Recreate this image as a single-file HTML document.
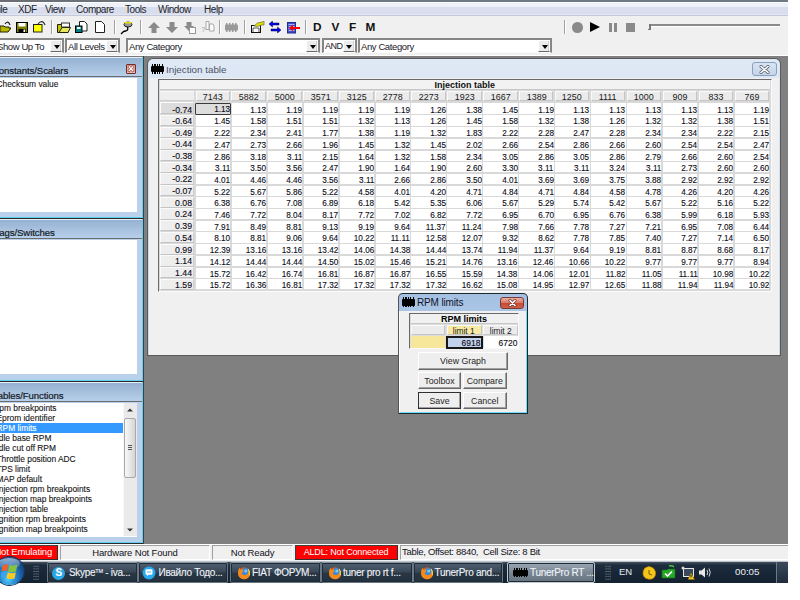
<!DOCTYPE html>
<html><head><meta charset="utf-8">
<style>
*{margin:0;padding:0;box-sizing:border-box}
html,body{width:800px;height:600px;overflow:hidden;background:#fff}
body{position:relative;font-family:"Liberation Sans",sans-serif;color:#1a1a1a}
.a{position:absolute}
.t{position:absolute;white-space:nowrap;line-height:1}
/* top */
#topstrip{left:0;top:0;width:788px;height:2px;background:linear-gradient(90deg,#6a6e74,#6c7884 30%,#6e7a86)}
#menu{left:0;top:2px;width:788px;height:14.5px;background:linear-gradient(#fff 0,#fff 1px,#eef1f8 1.5px,#eef1f8 4.5px,#d9deef 5.5px,#d9deef 12px,#e4e8f6 12.6px,#e4e8f6 13px,#c6cad8 13.5px,#c6cad8 14.5px)}
#menu .t{top:2.6px;font-size:10px;color:#1e1e28;letter-spacing:-0.45px}
#tool{left:0;top:16px;width:788px;height:40px;background:#f0f0f0}
.sep{position:absolute;width:2px;border-left:1px solid #a0a0a0;border-right:1px solid #fff}
.combo{position:absolute;top:38px;height:15px;background:#fff;border-top:2px solid #868686;border-left:2px solid #868686;border-right:2px solid #868686;border-bottom:1px solid #fafafa}
.combo .t{left:1px;top:2px;font-size:9.5px;color:#1a1a2a;letter-spacing:-0.4px}
.cbtn{position:absolute;top:0;right:0;width:12px;height:12px;background:#ececec;border-right:1px solid #fff;border-bottom:1.5px solid #6a6a6a;border-top:1px solid #fff;border-left:1px solid #fff;box-shadow:inset -1px 0 0 #d0d0d0}
.cbtn:after{content:"";position:absolute;left:2.5px;top:3.5px;border-left:3px solid transparent;border-right:3px solid transparent;border-top:4px solid #000}
#toolline{left:0;top:55px;width:788px;height:2px;border-top:1px solid #fff;border-bottom:1px solid #7a7a7a}
/* mdi */
#mdi{left:143px;top:56px;width:645px;height:488px;background:#808080;border-left:1px solid #404040}
/* dock panels */
.dock{position:absolute;left:0;width:143px;background:#b9d1ea;border-bottom:1px solid #2a2a2a;}
.dock .cyan{position:absolute;right:0;top:0;bottom:0;width:1px;background:#5fd0f2}
.dock .cyanb{position:absolute;left:0;right:0;bottom:0;height:1px;background:#5fd0f2}
.dock .ttl{position:absolute;left:0;top:0;width:143px;height:20px;background:linear-gradient(#95b1d2,#b7cfe9);border-top:1px solid #e6eef8;border-bottom:1px solid #6c6c6c}
.dock .ttl .t{left:-8px;top:8.3px;font-size:9.6px;color:#141a24;letter-spacing:-0.1px;-webkit-text-stroke:0.2px #141a24}
.dock .lst{position:absolute;left:0;top:21px;width:137px;background:#fff}
.li{position:absolute;left:-3.5px;width:126.5px;height:10px;font-size:8.4px;line-height:10.4px;white-space:nowrap;color:#141414;padding-left:0;-webkit-text-stroke:0.1px #141414}
.li.sel{background:#3399ff;color:#fff;-webkit-text-stroke:0.1px #fff}
/* injection window */
#inj{left:147px;top:58px;width:634px;height:298px;background:#5a5a5a;border-radius:6px 6px 0 0}
#injin{left:148px;top:59px;width:632px;height:296px;background:linear-gradient(#dfe9f5,#c9daee 60%,#c6d8ed);border-radius:5px 5px 0 0}
#injcl{left:149px;top:77.5px;width:630px;height:277px;background:#f0f0f0}
.chip{position:absolute;background:#000;border-radius:1px}
.chip:before,.chip:after{content:"";position:absolute;left:1px;right:1px;height:1.6px;background:repeating-linear-gradient(90deg,#000 0 1.2px,transparent 1.2px 2.4px)}
.chip:before{top:-1.6px}.chip:after{bottom:-1.6px}
#grid{left:158px;top:78.5px;width:614px;height:213px;background:#d9d9d9;border-top:1.5px solid #6a6a6a;border-left:1.5px solid #6a6a6a;border-right:1px solid #fafafa;border-bottom:1px solid #fafafa}
#gtitle{left:160px;top:80px;width:610px;height:10px;background:#f2f2f2;border-bottom:1px solid #c8c8c8}
.ch{position:absolute;background:#ebebeb;border-top:1px solid #fbfbfb;border-left:1px solid #fbfbfb;border-bottom:1px solid #c6c6c6;border-right:1px solid #c6c6c6;font-size:9.6px;line-height:10.2px;text-align:center;color:#1a1a22;white-space:nowrap}
.ch span,.rh span,.dc span{display:inline-block;transform:scaleX(.88)}
.ch span{transform-origin:50% 50%;transform:scaleX(.93)}
.rh span{transform:scaleX(.94)}
.rh span,.dc span{transform-origin:100% 50%}
.rh{position:absolute;background:#eeeeee;border-top:1px solid #fbfbfb;border-left:1px solid #fbfbfb;border-bottom:1.5px solid #c4c4c4;border-right:1px solid #cfcfcf;font-size:9.3px;line-height:13.3px;text-align:right;padding-right:0.8px;-webkit-text-stroke:0.12px #0a0a14;color:#0a0a14;white-space:nowrap}
.rh.selr{background:#dcdcdc}
.dc{position:absolute;background:#fff;font-size:9.3px;line-height:13.4px;text-align:right;padding-right:0px;-webkit-text-stroke:0.12px #0a0a14;color:#0a0a14;white-space:nowrap}
.dc.sel{z-index:2;background:#dddddd;border:1.8px solid #3a3a3a;line-height:11.5px;padding-right:0.4px;border-radius:1px}
/* dialog */
#dlg{left:398px;top:292.5px;width:130px;height:121px;background:#1c2a30;border-radius:5px 5px 0 0;border-left:1px solid #555}
#dlgin{left:399px;top:293.5px;width:128px;height:119px;background:linear-gradient(#a4c0e2,#bcd2ec 55%,#c8dcf0);border-radius:4px 4px 0 0}
#dlgcl{left:399px;top:311px;width:128px;height:101.8px;background:#f0f0f0;border-left:1px solid #fafcff;border-right:1.2px solid #6fdcfa;border-bottom:1.4px solid #6fdcfa}
.btn{position:absolute;background:#eeeeee;border-top:1px solid #fff;border-left:1px solid #fff;border-right:1px solid #6a6a6a;border-bottom:1px solid #6a6a6a;box-shadow:inset -1px -1px 0 #a0a0a0;font-size:8.8px;text-align:center;color:#1e1e1e;line-height:16px;white-space:nowrap}
/* status */
#status{left:0;top:544px;width:788px;height:17px;background:#f0f0f0;border-top:1px solid #fff}
.sp{position:absolute;top:545px;height:14.5px;background:#f0f0f0;border-top:1px solid #a0a0a0;border-left:1px solid #a0a0a0;border-right:1px solid #fff;border-bottom:1px solid #fff;font-size:9.5px;line-height:13px;text-align:center;white-space:nowrap;color:#10101a;overflow:hidden;letter-spacing:-0.15px}
.sp.red{background:#ff0000;color:#fff;border-color:#404040 #303030 #303030 #404040;line-height:12.2px}
/* taskbar */
#task{left:0;top:560.8px;width:788px;height:22.7px;background:linear-gradient(#b8c2cc 0,#b8c2cc 1px,#4a5866 1px,#334150 2.2px,#1e2d3d 4px,#172536 60%,#14212f);}
.tb{position:absolute;top:562px;height:21px;border:1px solid #6a7784;border-top-color:#8a96a2;border-radius:2px;background:linear-gradient(#506070,#3a4858 45%,#283644 55%,#243240);box-shadow:inset 0 0 0 1px #1e2a36}
.tb .t{left:21px;top:4.8px;font-size:10px;color:#f0f4f8;font-weight:normal;letter-spacing:-0.3px;-webkit-text-stroke:0.1px #f0f4f8}
.tb.act{background:linear-gradient(#9aa6b2,#7a8794 50%,#66737f);border-color:#c0cad4}
.ff{position:absolute;left:5px;top:3px;width:14px;height:14px;border-radius:50%;background:radial-gradient(circle at 62% 38%,#6aa8e8 0 22%,#2c62b8 40%,#f08a20 48%,#e86a10 70%,#b8400a 100%)}
</style></head><body>
<div class="a" id="topstrip"></div>
<div class="a" id="menu">
  <div class="t" style="left:-7px">File</div>
  <div class="t" style="left:18px">XDF</div>
  <div class="t" style="left:45px">View</div>
  <div class="t" style="left:76px">Compare</div>
  <div class="t" style="left:125px">Tools</div>
  <div class="t" style="left:158px">Window</div>
  <div class="t" style="left:204px">Help</div>
</div>
<div class="a" id="tool">
  <!-- toolbar icons -->
  <svg class="a" style="left:0;top:5px" width="11" height="12" viewBox="0 0 11 12"><path d="M0 5 L4 5 L5 6 L9 6 L9 7 L11 7 L8 11 L0 11 Z" fill="#b8b800" stroke="#202000" stroke-width="1"/><path d="M5 3 Q7 0 9 2 L10 4" fill="none" stroke="#202020" stroke-width="1.2"/></svg>
  <svg class="a" style="left:15.5px;top:5.5px" width="12" height="11" viewBox="0 0 12 11"><rect x="0.5" y="0.5" width="11" height="10" fill="#808000" stroke="#000"/><rect x="2.5" y="1" width="7" height="3.5" fill="#fff"/><rect x="2.5" y="7" width="7" height="3.5" fill="#000"/><rect x="7.5" y="7.5" width="1.5" height="2.5" fill="#fff"/></svg>
  <svg class="a" style="left:33px;top:4.5px" width="13" height="12" viewBox="0 0 13 12"><rect x="0.5" y="3.5" width="8.5" height="7.5" fill="#ffff00" stroke="#202020"/><path d="M5 3 Q8 -1 11 2 L12 4" fill="none" stroke="#303030" stroke-width="1.2"/></svg>
  <div class="sep" style="left:51px;top:4px;height:14px"></div>
  <svg class="a" style="left:57px;top:6px" width="14" height="11" viewBox="0 0 14 11"><path d="M0.5 2.5 L4 2.5 L5 3.5 L11 3.5 L11 10.5 L0.5 10.5Z" fill="#c8c800" stroke="#202000"/><path d="M2 10.5 L5 5.5 L13.5 5.5 L11 10.5Z" fill="#e8e860" stroke="#202000"/><rect x="4.5" y="1" width="8" height="4" fill="#fff" stroke="#303030"/></svg>
  <svg class="a" style="left:75px;top:5px" width="13" height="12" viewBox="0 0 13 12"><path d="M4.5 0.5 L9.5 0.5 L12 3 L12 10 L4.5 10Z" fill="#fff" stroke="#202020"/><rect x="0.5" y="5" width="6.5" height="6.5" fill="#008080" stroke="#000"/><rect x="2" y="6" width="3.5" height="2" fill="#fff"/></svg>
  <svg class="a" style="left:95px;top:5px" width="10" height="12" viewBox="0 0 10 12"><path d="M0.5 0.5 L6.5 0.5 L9.5 3.5 L9.5 11.5 L0.5 11.5Z" fill="#fff" stroke="#202020"/></svg>
  <div class="sep" style="left:114px;top:4px;height:14px"></div>
  <svg class="a" style="left:120px;top:4.5px" width="14" height="14" viewBox="0 0 14 14"><path d="M7 5 Q9 9 6 10 Q4 10 3 11 Q2 12 1 13" fill="none" stroke="#000" stroke-width="1.3"/><ellipse cx="8" cy="3.5" rx="4" ry="2.5" fill="#999" stroke="#222"/><rect x="4.5" y="1" width="7" height="1.5" fill="#e8e000"/></svg>
  <div class="sep" style="left:140px;top:4px;height:14px"></div>
  <svg class="a" style="left:147.5px;top:6px" width="12" height="11" viewBox="0 0 12 11"><path d="M6 0 L12 6 L8.5 6 L8.5 11 L3.5 11 L3.5 6 L0 6Z" fill="#8a8a8a"/></svg>
  <svg class="a" style="left:165.5px;top:6px" width="12" height="11" viewBox="0 0 12 11"><path d="M6 11 L12 5 L8.5 5 L8.5 0 L3.5 0 L3.5 5 L0 5Z" fill="#8a8a8a"/></svg>
  <svg class="a" style="left:183.5px;top:6px" width="13" height="12" viewBox="0 0 13 12"><path d="M5 9 L10 4 L7.5 4 L7.5 0 L2.5 0 L2.5 4 L0 4Z" fill="#8a8a8a"/><rect x="5.5" y="5.5" width="6" height="6" fill="#fafafa" stroke="#999"/></svg>
  <svg class="a" style="left:200.5px;top:5px" width="14" height="12" viewBox="0 0 14 12"><text x="0" y="11" font-size="8" fill="#a0a0a0" font-family="Liberation Sans">?</text><path d="M5 0.5 L8 0.5 L8 8.5 L5 8.5Z M8.5 3 L12 3 L13 5 L13 10 L8.5 10Z" fill="#fafafa" stroke="#a8a8a8"/></svg>
  <div class="sep" style="left:219px;top:4px;height:14px"></div>
  <svg class="a" style="left:224.5px;top:7px" width="13" height="9" viewBox="0 0 13 9"><rect x="0" y="1.5" width="13" height="6" rx="1" fill="#999"/><path d="M1 0h1.5v9H1zM4 0h1.5v9H4zM7 0h1.5v9H7zM10 0h1.5v9H10z" fill="#999"/></svg>
  <div class="sep" style="left:243.5px;top:4px;height:14px"></div>
  <svg class="a" style="left:250.5px;top:5px" width="14" height="12" viewBox="0 0 14 12"><rect x="0.5" y="4.5" width="9" height="7" fill="#fff" stroke="#111"/><path d="M2 11 L2 7 L8 7 L8 11" fill="none" stroke="#555"/><path d="M3 5 Q6 1 11 1 L13 0 L13 4 L11 4 Q8 5 6 5.5Z" fill="#e0e000" stroke="#555" stroke-width="0.6"/></svg>
  <svg class="a" style="left:269px;top:5px" width="12" height="12" viewBox="0 0 12 12"><path d="M0 3 L3.5 0 L3.5 2 L10 2 L10 4 L3.5 4 L3.5 6Z" fill="#0000ee" stroke="#000040" stroke-width="0.5"/><path d="M12 9 L8.5 6 L8.5 8 L2 8 L2 10 L8.5 10 L8.5 12Z" fill="#0000ee" stroke="#000040" stroke-width="0.5"/></svg>
  <svg class="a" style="left:286.5px;top:5.5px" width="13" height="12" viewBox="0 0 13 12"><rect x="0.5" y="0.5" width="8" height="10.5" fill="#3a50d0" stroke="#20308a"/><path d="M1.5 2.5h6M1.5 4.5h6M1.5 6.5h6M1.5 8.5h6" stroke="#c8d0ff" stroke-width="0.8"/><path d="M2 6 L6 2.5 L6 5 L13 5 L13 7 L6 7 L6 9.5Z" fill="#ff0000"/></svg>
  <div class="sep" style="left:304.5px;top:4px;height:14px"></div>
  <div class="t" style="left:313px;top:6px;font-size:11.8px;font-weight:bold;color:#111">D</div>
  <div class="t" style="left:331.5px;top:6px;font-size:11.8px;font-weight:bold;color:#111">V</div>
  <div class="t" style="left:349px;top:6px;font-size:11.8px;font-weight:bold;color:#111">F</div>
  <div class="t" style="left:365.5px;top:6px;font-size:11.8px;font-weight:bold;color:#111">M</div>
  <div class="sep" style="left:563.5px;top:4px;height:14px"></div>
  <div class="a" style="left:572px;top:6px;width:10.5px;height:10.5px;border-radius:50%;background:#8a8a8a"></div>
  <svg class="a" style="left:590px;top:6px" width="10" height="10" viewBox="0 0 10 10"><path d="M0 0 L10 5 L0 10Z" fill="#000"/></svg>
  <div class="a" style="left:609px;top:7px;width:3px;height:8.5px;background:#8a8a8a"></div>
  <div class="a" style="left:613.5px;top:7px;width:3px;height:8.5px;background:#8a8a8a"></div>
  <div class="a" style="left:626px;top:7px;width:9px;height:8.5px;background:#8a8a8a"></div>
  <div class="a" style="left:649.5px;top:8px;width:130px;height:2px;background:#8a8a8a;border-bottom:0}
  "></div>
  <div class="a" style="left:649.5px;top:10px;width:130px;height:1px;background:#fff"></div>
  <div class="a" style="left:649px;top:8px;width:2px;height:6px;background:#7a7a7a"></div>
  <div class="a" style="left:648px;top:13px;width:3px;height:1px;background:#7a7a7a"></div>
  <!-- combos -->
  <div class="combo" style="left:-6px;top:22px;width:70px"><div class="t">Show Up To</div><div class="cbtn"></div></div>
  <div class="combo" style="left:65px;top:22px;width:55px"><div class="t">All Levels</div><div class="cbtn"></div></div>
  <div class="combo" style="left:126px;top:22px;width:194px"><div class="t">Any Category</div><div class="cbtn"></div></div>
  <div class="combo" style="left:321.5px;top:22px;width:35px"><div class="t" style="letter-spacing:-0.5px;left:1.5px;font-size:9px;top:2.3px">AND</div><div class="cbtn"></div></div>
  <div class="combo" style="left:358px;top:22px;width:194px"><div class="t">Any Category</div><div class="cbtn"></div></div>
</div>
<div class="a" id="toolline"></div>
<div class="a" id="mdi"></div>

<!-- dock panel 1 -->
<div class="dock" style="top:56.5px;height:162px">
  <div class="ttl"><div class="t">Constants/Scalars</div></div>
  <div class="lst" style="height:134px"><div class="t" style="left:-3.5px;top:2.3px;font-size:8.4px;color:#141414;-webkit-text-stroke:0.1px #141414">Checksum value</div></div>
  <div class="cyan"></div><div class="cyanb"></div>
  <div class="a" style="left:126px;top:7.5px;width:10px;height:9.5px;border:1px solid #6a3030;background:#f8d0c8;border-radius:1px"></div>
  <svg class="a" style="left:127px;top:8.5px" width="8" height="7.5" viewBox="0 0 8 7.5"><rect x="0" y="0" width="8" height="7.5" fill="#f0a090"/><path d="M2.2 1.8 L5.8 5.7 M5.8 1.8 L2.2 5.7" stroke="#904848" stroke-width="2.4" stroke-linecap="square"/><path d="M2.2 1.8 L5.8 5.7 M5.8 1.8 L2.2 5.7" stroke="#fff" stroke-width="1.3" stroke-linecap="square"/></svg>
</div>
<!-- dock panel 2 -->
<div class="dock" style="top:218.5px;height:163px">
  <div class="ttl"><div class="t" style="left:-8.5px">Flags/Switches</div></div>
  <div class="lst" style="height:134px"></div>
  <div class="cyan"></div><div class="cyanb"></div>
</div>
<!-- dock panel 3 -->
<div class="dock" style="top:381.5px;height:162px">
  <div class="ttl"><div class="t" style="left:-7px">Tables/Functions</div></div>
  <div class="lst" style="height:134px;overflow:hidden"></div>
  <div class="cyan"></div><div class="cyanb"></div>
</div>
<div class="li" style="top:403.0px">rpm breakpoints</div>
<div class="li" style="top:413.1px">Eprom identifier</div>
<div class="li sel" style="top:423.2px">RPM limits</div>
<div class="li" style="top:433.3px">Idle base RPM</div>
<div class="li" style="top:443.4px">Idle cut off RPM</div>
<div class="li" style="top:453.5px">Throttle position ADC</div>
<div class="li" style="top:463.6px">TPS limit</div>
<div class="li" style="top:473.7px">MAP default</div>
<div class="li" style="top:483.8px">Injection rpm breakpoints</div>
<div class="li" style="top:493.9px">Injection map breakpoints</div>
<div class="li" style="top:504.0px">Injection table</div>
<div class="li" style="top:514.1px">Ignition rpm breakpoints</div>
<div class="li" style="top:524.2px">Ignition map breakpoints</div>
<!-- scrollbar -->
<div class="a" style="left:123px;top:403px;width:14px;height:133px;background:#eaeaea;border-left:1px solid #f8f8f8"></div>
<svg class="a" style="left:127px;top:408px" width="6" height="4" viewBox="0 0 6 4"><path d="M0 3.5 L3 0.5 L6 3.5Z" fill="#333"/></svg>
<svg class="a" style="left:127px;top:527.5px" width="6" height="4" viewBox="0 0 6 4"><path d="M0 0.5 L3 3.5 L6 0.5Z" fill="#333"/></svg>
<div class="a" style="left:124px;top:417.5px;width:12px;height:60px;border:1px solid #a8a8a8;border-radius:2px;background:linear-gradient(90deg,#f8f8f8,#e4e4e4 60%,#d4d4d4)"></div>
<div class="a" style="left:128px;top:444.5px;width:4px;height:1px;background:#555;box-shadow:0 2px 0 #555,0 4px 0 #555"></div>

<!-- injection window -->
<div class="a" id="inj"></div>
<div class="a" id="injin"></div>
<div class="chip" style="left:151px;top:65.5px;width:12.5px;height:6.5px"></div>
<div class="t" style="left:166px;top:64.5px;font-size:9.8px;color:#4e5266">Injection table</div>
<div class="a" style="left:752px;top:62px;width:25px;height:13.5px;border:1px solid #8aa0bc;border-radius:3px;background:linear-gradient(#d8e4f2,#c4d4e8)"></div>
<svg class="a" style="left:759px;top:64.5px" width="11" height="9" viewBox="0 0 11 9"><path d="M2 1.5 L9 7.5 M9 1.5 L2 7.5" stroke="#5a6470" stroke-width="3" stroke-linecap="round"/><path d="M2 1.5 L9 7.5 M9 1.5 L2 7.5" stroke="#fff" stroke-width="1.6" stroke-linecap="round"/></svg>
<div class="a" id="injcl"></div>
<div class="a" id="grid"></div>
<div class="a" id="gtitle"></div>
<div class="t" style="left:434.5px;top:81px;font-size:9px;font-weight:bold;color:#111">Injection table</div>
<div class="ch" style="left:195.50px;top:91.1px;width:34.5px;height:10px"><span>7143</span></div>
<div class="ch" style="left:231.44px;top:91.1px;width:34.5px;height:10px"><span>5882</span></div>
<div class="ch" style="left:267.38px;top:91.1px;width:34.5px;height:10px"><span>5000</span></div>
<div class="ch" style="left:303.32px;top:91.1px;width:34.5px;height:10px"><span>3571</span></div>
<div class="ch" style="left:339.26px;top:91.1px;width:34.5px;height:10px"><span>3125</span></div>
<div class="ch" style="left:375.20px;top:91.1px;width:34.5px;height:10px"><span>2778</span></div>
<div class="ch" style="left:411.14px;top:91.1px;width:34.5px;height:10px"><span>2273</span></div>
<div class="ch" style="left:447.08px;top:91.1px;width:34.5px;height:10px"><span>1923</span></div>
<div class="ch" style="left:483.02px;top:91.1px;width:34.5px;height:10px"><span>1667</span></div>
<div class="ch" style="left:518.96px;top:91.1px;width:34.5px;height:10px"><span>1389</span></div>
<div class="ch" style="left:554.90px;top:91.1px;width:34.5px;height:10px"><span>1250</span></div>
<div class="ch" style="left:590.84px;top:91.1px;width:34.5px;height:10px"><span>1111</span></div>
<div class="ch" style="left:626.78px;top:91.1px;width:34.5px;height:10px"><span>1000</span></div>
<div class="ch" style="left:662.72px;top:91.1px;width:34.5px;height:10px"><span>909</span></div>
<div class="ch" style="left:698.66px;top:91.1px;width:34.5px;height:10px"><span>833</span></div>
<div class="ch" style="left:734.60px;top:91.1px;width:34.5px;height:10px"><span>769</span></div>
<div class="a" style="left:160px;top:91.1px;width:33.75px;height:10px;background:#eeeeee;border-top:1px solid #fafafa;border-bottom:1px solid #d0d0d0"></div>
<div class="rh selr" style="left:160px;top:102.00px;width:34px;height:12.20px;line-height:14.73px"><span>-0.74</span></div>
<div class="dc sel" style="left:195.30px;top:103px;width:36px;height:11.6px"><span>1.13</span></div>
<div class="dc" style="left:231.74px;top:102.60px;width:34.4px;height:11.10px;line-height:14.83px"><span>1.13</span></div>
<div class="dc" style="left:267.68px;top:102.60px;width:34.4px;height:11.10px;line-height:14.83px"><span>1.19</span></div>
<div class="dc" style="left:303.62px;top:102.60px;width:34.4px;height:11.10px;line-height:14.83px"><span>1.19</span></div>
<div class="dc" style="left:339.56px;top:102.60px;width:34.4px;height:11.10px;line-height:14.83px"><span>1.19</span></div>
<div class="dc" style="left:375.50px;top:102.60px;width:34.4px;height:11.10px;line-height:14.83px"><span>1.19</span></div>
<div class="dc" style="left:411.44px;top:102.60px;width:34.4px;height:11.10px;line-height:14.83px"><span>1.26</span></div>
<div class="dc" style="left:447.38px;top:102.60px;width:34.4px;height:11.10px;line-height:14.83px"><span>1.38</span></div>
<div class="dc" style="left:483.32px;top:102.60px;width:34.4px;height:11.10px;line-height:14.83px"><span>1.45</span></div>
<div class="dc" style="left:519.26px;top:102.60px;width:34.4px;height:11.10px;line-height:14.83px"><span>1.19</span></div>
<div class="dc" style="left:555.20px;top:102.60px;width:34.4px;height:11.10px;line-height:14.83px"><span>1.13</span></div>
<div class="dc" style="left:591.14px;top:102.60px;width:34.4px;height:11.10px;line-height:14.83px"><span>1.13</span></div>
<div class="dc" style="left:627.08px;top:102.60px;width:34.4px;height:11.10px;line-height:14.83px"><span>1.13</span></div>
<div class="dc" style="left:663.02px;top:102.60px;width:34.4px;height:11.10px;line-height:14.83px"><span>1.13</span></div>
<div class="dc" style="left:698.96px;top:102.60px;width:34.4px;height:11.10px;line-height:14.83px"><span>1.13</span></div>
<div class="dc" style="left:734.90px;top:102.60px;width:34.4px;height:11.10px;line-height:14.83px"><span>1.19</span></div>
<div class="rh" style="left:160px;top:114.85px;width:34px;height:11.30px;line-height:11.38px"><span>-0.64</span></div>
<div class="dc" style="left:195.80px;top:115.45px;width:34.4px;height:10.20px;line-height:13.18px"><span>1.45</span></div>
<div class="dc" style="left:231.74px;top:115.45px;width:34.4px;height:10.20px;line-height:13.18px"><span>1.58</span></div>
<div class="dc" style="left:267.68px;top:115.45px;width:34.4px;height:10.20px;line-height:13.18px"><span>1.51</span></div>
<div class="dc" style="left:303.62px;top:115.45px;width:34.4px;height:10.20px;line-height:13.18px"><span>1.51</span></div>
<div class="dc" style="left:339.56px;top:115.45px;width:34.4px;height:10.20px;line-height:13.18px"><span>1.32</span></div>
<div class="dc" style="left:375.50px;top:115.45px;width:34.4px;height:10.20px;line-height:13.18px"><span>1.13</span></div>
<div class="dc" style="left:411.44px;top:115.45px;width:34.4px;height:10.20px;line-height:13.18px"><span>1.26</span></div>
<div class="dc" style="left:447.38px;top:115.45px;width:34.4px;height:10.20px;line-height:13.18px"><span>1.45</span></div>
<div class="dc" style="left:483.32px;top:115.45px;width:34.4px;height:10.20px;line-height:13.18px"><span>1.58</span></div>
<div class="dc" style="left:519.26px;top:115.45px;width:34.4px;height:10.20px;line-height:13.18px"><span>1.32</span></div>
<div class="dc" style="left:555.20px;top:115.45px;width:34.4px;height:10.20px;line-height:13.18px"><span>1.38</span></div>
<div class="dc" style="left:591.14px;top:115.45px;width:34.4px;height:10.20px;line-height:13.18px"><span>1.26</span></div>
<div class="dc" style="left:627.08px;top:115.45px;width:34.4px;height:10.20px;line-height:13.18px"><span>1.32</span></div>
<div class="dc" style="left:663.02px;top:115.45px;width:34.4px;height:10.20px;line-height:13.18px"><span>1.32</span></div>
<div class="dc" style="left:698.96px;top:115.45px;width:34.4px;height:10.20px;line-height:13.18px"><span>1.38</span></div>
<div class="dc" style="left:734.90px;top:115.45px;width:34.4px;height:10.20px;line-height:13.18px"><span>1.51</span></div>
<div class="rh" style="left:160px;top:126.55px;width:34px;height:11.30px;line-height:11.38px"><span>-0.49</span></div>
<div class="dc" style="left:195.80px;top:127.15px;width:34.4px;height:10.20px;line-height:13.18px"><span>2.22</span></div>
<div class="dc" style="left:231.74px;top:127.15px;width:34.4px;height:10.20px;line-height:13.18px"><span>2.34</span></div>
<div class="dc" style="left:267.68px;top:127.15px;width:34.4px;height:10.20px;line-height:13.18px"><span>2.41</span></div>
<div class="dc" style="left:303.62px;top:127.15px;width:34.4px;height:10.20px;line-height:13.18px"><span>1.77</span></div>
<div class="dc" style="left:339.56px;top:127.15px;width:34.4px;height:10.20px;line-height:13.18px"><span>1.38</span></div>
<div class="dc" style="left:375.50px;top:127.15px;width:34.4px;height:10.20px;line-height:13.18px"><span>1.19</span></div>
<div class="dc" style="left:411.44px;top:127.15px;width:34.4px;height:10.20px;line-height:13.18px"><span>1.32</span></div>
<div class="dc" style="left:447.38px;top:127.15px;width:34.4px;height:10.20px;line-height:13.18px"><span>1.83</span></div>
<div class="dc" style="left:483.32px;top:127.15px;width:34.4px;height:10.20px;line-height:13.18px"><span>2.22</span></div>
<div class="dc" style="left:519.26px;top:127.15px;width:34.4px;height:10.20px;line-height:13.18px"><span>2.28</span></div>
<div class="dc" style="left:555.20px;top:127.15px;width:34.4px;height:10.20px;line-height:13.18px"><span>2.47</span></div>
<div class="dc" style="left:591.14px;top:127.15px;width:34.4px;height:10.20px;line-height:13.18px"><span>2.28</span></div>
<div class="dc" style="left:627.08px;top:127.15px;width:34.4px;height:10.20px;line-height:13.18px"><span>2.34</span></div>
<div class="dc" style="left:663.02px;top:127.15px;width:34.4px;height:10.20px;line-height:13.18px"><span>2.34</span></div>
<div class="dc" style="left:698.96px;top:127.15px;width:34.4px;height:10.20px;line-height:13.18px"><span>2.22</span></div>
<div class="dc" style="left:734.90px;top:127.15px;width:34.4px;height:10.20px;line-height:13.18px"><span>2.15</span></div>
<div class="rh" style="left:160px;top:138.25px;width:34px;height:11.30px;line-height:11.38px"><span>-0.44</span></div>
<div class="dc" style="left:195.80px;top:138.85px;width:34.4px;height:10.20px;line-height:13.18px"><span>2.47</span></div>
<div class="dc" style="left:231.74px;top:138.85px;width:34.4px;height:10.20px;line-height:13.18px"><span>2.73</span></div>
<div class="dc" style="left:267.68px;top:138.85px;width:34.4px;height:10.20px;line-height:13.18px"><span>2.66</span></div>
<div class="dc" style="left:303.62px;top:138.85px;width:34.4px;height:10.20px;line-height:13.18px"><span>1.96</span></div>
<div class="dc" style="left:339.56px;top:138.85px;width:34.4px;height:10.20px;line-height:13.18px"><span>1.45</span></div>
<div class="dc" style="left:375.50px;top:138.85px;width:34.4px;height:10.20px;line-height:13.18px"><span>1.32</span></div>
<div class="dc" style="left:411.44px;top:138.85px;width:34.4px;height:10.20px;line-height:13.18px"><span>1.45</span></div>
<div class="dc" style="left:447.38px;top:138.85px;width:34.4px;height:10.20px;line-height:13.18px"><span>2.02</span></div>
<div class="dc" style="left:483.32px;top:138.85px;width:34.4px;height:10.20px;line-height:13.18px"><span>2.66</span></div>
<div class="dc" style="left:519.26px;top:138.85px;width:34.4px;height:10.20px;line-height:13.18px"><span>2.54</span></div>
<div class="dc" style="left:555.20px;top:138.85px;width:34.4px;height:10.20px;line-height:13.18px"><span>2.86</span></div>
<div class="dc" style="left:591.14px;top:138.85px;width:34.4px;height:10.20px;line-height:13.18px"><span>2.66</span></div>
<div class="dc" style="left:627.08px;top:138.85px;width:34.4px;height:10.20px;line-height:13.18px"><span>2.60</span></div>
<div class="dc" style="left:663.02px;top:138.85px;width:34.4px;height:10.20px;line-height:13.18px"><span>2.54</span></div>
<div class="dc" style="left:698.96px;top:138.85px;width:34.4px;height:10.20px;line-height:13.18px"><span>2.54</span></div>
<div class="dc" style="left:734.90px;top:138.85px;width:34.4px;height:10.20px;line-height:13.18px"><span>2.47</span></div>
<div class="rh" style="left:160px;top:149.95px;width:34px;height:11.30px;line-height:11.38px"><span>-0.38</span></div>
<div class="dc" style="left:195.80px;top:150.55px;width:34.4px;height:10.20px;line-height:13.18px"><span>2.86</span></div>
<div class="dc" style="left:231.74px;top:150.55px;width:34.4px;height:10.20px;line-height:13.18px"><span>3.18</span></div>
<div class="dc" style="left:267.68px;top:150.55px;width:34.4px;height:10.20px;line-height:13.18px"><span>3.11</span></div>
<div class="dc" style="left:303.62px;top:150.55px;width:34.4px;height:10.20px;line-height:13.18px"><span>2.15</span></div>
<div class="dc" style="left:339.56px;top:150.55px;width:34.4px;height:10.20px;line-height:13.18px"><span>1.64</span></div>
<div class="dc" style="left:375.50px;top:150.55px;width:34.4px;height:10.20px;line-height:13.18px"><span>1.32</span></div>
<div class="dc" style="left:411.44px;top:150.55px;width:34.4px;height:10.20px;line-height:13.18px"><span>1.58</span></div>
<div class="dc" style="left:447.38px;top:150.55px;width:34.4px;height:10.20px;line-height:13.18px"><span>2.34</span></div>
<div class="dc" style="left:483.32px;top:150.55px;width:34.4px;height:10.20px;line-height:13.18px"><span>3.05</span></div>
<div class="dc" style="left:519.26px;top:150.55px;width:34.4px;height:10.20px;line-height:13.18px"><span>2.86</span></div>
<div class="dc" style="left:555.20px;top:150.55px;width:34.4px;height:10.20px;line-height:13.18px"><span>3.05</span></div>
<div class="dc" style="left:591.14px;top:150.55px;width:34.4px;height:10.20px;line-height:13.18px"><span>2.86</span></div>
<div class="dc" style="left:627.08px;top:150.55px;width:34.4px;height:10.20px;line-height:13.18px"><span>2.79</span></div>
<div class="dc" style="left:663.02px;top:150.55px;width:34.4px;height:10.20px;line-height:13.18px"><span>2.66</span></div>
<div class="dc" style="left:698.96px;top:150.55px;width:34.4px;height:10.20px;line-height:13.18px"><span>2.60</span></div>
<div class="dc" style="left:734.90px;top:150.55px;width:34.4px;height:10.20px;line-height:13.18px"><span>2.54</span></div>
<div class="rh" style="left:160px;top:161.65px;width:34px;height:11.30px;line-height:11.38px"><span>-0.34</span></div>
<div class="dc" style="left:195.80px;top:162.25px;width:34.4px;height:10.20px;line-height:13.18px"><span>3.11</span></div>
<div class="dc" style="left:231.74px;top:162.25px;width:34.4px;height:10.20px;line-height:13.18px"><span>3.50</span></div>
<div class="dc" style="left:267.68px;top:162.25px;width:34.4px;height:10.20px;line-height:13.18px"><span>3.56</span></div>
<div class="dc" style="left:303.62px;top:162.25px;width:34.4px;height:10.20px;line-height:13.18px"><span>2.47</span></div>
<div class="dc" style="left:339.56px;top:162.25px;width:34.4px;height:10.20px;line-height:13.18px"><span>1.90</span></div>
<div class="dc" style="left:375.50px;top:162.25px;width:34.4px;height:10.20px;line-height:13.18px"><span>1.64</span></div>
<div class="dc" style="left:411.44px;top:162.25px;width:34.4px;height:10.20px;line-height:13.18px"><span>1.90</span></div>
<div class="dc" style="left:447.38px;top:162.25px;width:34.4px;height:10.20px;line-height:13.18px"><span>2.60</span></div>
<div class="dc" style="left:483.32px;top:162.25px;width:34.4px;height:10.20px;line-height:13.18px"><span>3.30</span></div>
<div class="dc" style="left:519.26px;top:162.25px;width:34.4px;height:10.20px;line-height:13.18px"><span>3.11</span></div>
<div class="dc" style="left:555.20px;top:162.25px;width:34.4px;height:10.20px;line-height:13.18px"><span>3.11</span></div>
<div class="dc" style="left:591.14px;top:162.25px;width:34.4px;height:10.20px;line-height:13.18px"><span>3.24</span></div>
<div class="dc" style="left:627.08px;top:162.25px;width:34.4px;height:10.20px;line-height:13.18px"><span>3.11</span></div>
<div class="dc" style="left:663.02px;top:162.25px;width:34.4px;height:10.20px;line-height:13.18px"><span>2.73</span></div>
<div class="dc" style="left:698.96px;top:162.25px;width:34.4px;height:10.20px;line-height:13.18px"><span>2.60</span></div>
<div class="dc" style="left:734.90px;top:162.25px;width:34.4px;height:10.20px;line-height:13.18px"><span>2.60</span></div>
<div class="rh" style="left:160px;top:173.35px;width:34px;height:11.30px;line-height:11.38px"><span>-0.22</span></div>
<div class="dc" style="left:195.80px;top:173.95px;width:34.4px;height:10.20px;line-height:13.18px"><span>4.01</span></div>
<div class="dc" style="left:231.74px;top:173.95px;width:34.4px;height:10.20px;line-height:13.18px"><span>4.46</span></div>
<div class="dc" style="left:267.68px;top:173.95px;width:34.4px;height:10.20px;line-height:13.18px"><span>4.46</span></div>
<div class="dc" style="left:303.62px;top:173.95px;width:34.4px;height:10.20px;line-height:13.18px"><span>3.56</span></div>
<div class="dc" style="left:339.56px;top:173.95px;width:34.4px;height:10.20px;line-height:13.18px"><span>3.11</span></div>
<div class="dc" style="left:375.50px;top:173.95px;width:34.4px;height:10.20px;line-height:13.18px"><span>2.66</span></div>
<div class="dc" style="left:411.44px;top:173.95px;width:34.4px;height:10.20px;line-height:13.18px"><span>2.86</span></div>
<div class="dc" style="left:447.38px;top:173.95px;width:34.4px;height:10.20px;line-height:13.18px"><span>3.50</span></div>
<div class="dc" style="left:483.32px;top:173.95px;width:34.4px;height:10.20px;line-height:13.18px"><span>4.01</span></div>
<div class="dc" style="left:519.26px;top:173.95px;width:34.4px;height:10.20px;line-height:13.18px"><span>3.69</span></div>
<div class="dc" style="left:555.20px;top:173.95px;width:34.4px;height:10.20px;line-height:13.18px"><span>3.69</span></div>
<div class="dc" style="left:591.14px;top:173.95px;width:34.4px;height:10.20px;line-height:13.18px"><span>3.75</span></div>
<div class="dc" style="left:627.08px;top:173.95px;width:34.4px;height:10.20px;line-height:13.18px"><span>3.88</span></div>
<div class="dc" style="left:663.02px;top:173.95px;width:34.4px;height:10.20px;line-height:13.18px"><span>2.92</span></div>
<div class="dc" style="left:698.96px;top:173.95px;width:34.4px;height:10.20px;line-height:13.18px"><span>2.92</span></div>
<div class="dc" style="left:734.90px;top:173.95px;width:34.4px;height:10.20px;line-height:13.18px"><span>2.92</span></div>
<div class="rh" style="left:160px;top:185.05px;width:34px;height:11.30px;line-height:11.38px"><span>-0.07</span></div>
<div class="dc" style="left:195.80px;top:185.65px;width:34.4px;height:10.20px;line-height:13.18px"><span>5.22</span></div>
<div class="dc" style="left:231.74px;top:185.65px;width:34.4px;height:10.20px;line-height:13.18px"><span>5.67</span></div>
<div class="dc" style="left:267.68px;top:185.65px;width:34.4px;height:10.20px;line-height:13.18px"><span>5.86</span></div>
<div class="dc" style="left:303.62px;top:185.65px;width:34.4px;height:10.20px;line-height:13.18px"><span>5.22</span></div>
<div class="dc" style="left:339.56px;top:185.65px;width:34.4px;height:10.20px;line-height:13.18px"><span>4.58</span></div>
<div class="dc" style="left:375.50px;top:185.65px;width:34.4px;height:10.20px;line-height:13.18px"><span>4.01</span></div>
<div class="dc" style="left:411.44px;top:185.65px;width:34.4px;height:10.20px;line-height:13.18px"><span>4.20</span></div>
<div class="dc" style="left:447.38px;top:185.65px;width:34.4px;height:10.20px;line-height:13.18px"><span>4.71</span></div>
<div class="dc" style="left:483.32px;top:185.65px;width:34.4px;height:10.20px;line-height:13.18px"><span>4.84</span></div>
<div class="dc" style="left:519.26px;top:185.65px;width:34.4px;height:10.20px;line-height:13.18px"><span>4.71</span></div>
<div class="dc" style="left:555.20px;top:185.65px;width:34.4px;height:10.20px;line-height:13.18px"><span>4.84</span></div>
<div class="dc" style="left:591.14px;top:185.65px;width:34.4px;height:10.20px;line-height:13.18px"><span>4.58</span></div>
<div class="dc" style="left:627.08px;top:185.65px;width:34.4px;height:10.20px;line-height:13.18px"><span>4.78</span></div>
<div class="dc" style="left:663.02px;top:185.65px;width:34.4px;height:10.20px;line-height:13.18px"><span>4.26</span></div>
<div class="dc" style="left:698.96px;top:185.65px;width:34.4px;height:10.20px;line-height:13.18px"><span>4.20</span></div>
<div class="dc" style="left:734.90px;top:185.65px;width:34.4px;height:10.20px;line-height:13.18px"><span>4.26</span></div>
<div class="rh" style="left:160px;top:196.75px;width:34px;height:11.30px;line-height:11.38px"><span>0.08</span></div>
<div class="dc" style="left:195.80px;top:197.35px;width:34.4px;height:10.20px;line-height:13.18px"><span>6.38</span></div>
<div class="dc" style="left:231.74px;top:197.35px;width:34.4px;height:10.20px;line-height:13.18px"><span>6.76</span></div>
<div class="dc" style="left:267.68px;top:197.35px;width:34.4px;height:10.20px;line-height:13.18px"><span>7.08</span></div>
<div class="dc" style="left:303.62px;top:197.35px;width:34.4px;height:10.20px;line-height:13.18px"><span>6.89</span></div>
<div class="dc" style="left:339.56px;top:197.35px;width:34.4px;height:10.20px;line-height:13.18px"><span>6.18</span></div>
<div class="dc" style="left:375.50px;top:197.35px;width:34.4px;height:10.20px;line-height:13.18px"><span>5.42</span></div>
<div class="dc" style="left:411.44px;top:197.35px;width:34.4px;height:10.20px;line-height:13.18px"><span>5.35</span></div>
<div class="dc" style="left:447.38px;top:197.35px;width:34.4px;height:10.20px;line-height:13.18px"><span>6.06</span></div>
<div class="dc" style="left:483.32px;top:197.35px;width:34.4px;height:10.20px;line-height:13.18px"><span>5.67</span></div>
<div class="dc" style="left:519.26px;top:197.35px;width:34.4px;height:10.20px;line-height:13.18px"><span>5.29</span></div>
<div class="dc" style="left:555.20px;top:197.35px;width:34.4px;height:10.20px;line-height:13.18px"><span>5.74</span></div>
<div class="dc" style="left:591.14px;top:197.35px;width:34.4px;height:10.20px;line-height:13.18px"><span>5.42</span></div>
<div class="dc" style="left:627.08px;top:197.35px;width:34.4px;height:10.20px;line-height:13.18px"><span>5.67</span></div>
<div class="dc" style="left:663.02px;top:197.35px;width:34.4px;height:10.20px;line-height:13.18px"><span>5.22</span></div>
<div class="dc" style="left:698.96px;top:197.35px;width:34.4px;height:10.20px;line-height:13.18px"><span>5.16</span></div>
<div class="dc" style="left:734.90px;top:197.35px;width:34.4px;height:10.20px;line-height:13.18px"><span>5.22</span></div>
<div class="rh" style="left:160px;top:208.45px;width:34px;height:11.30px;line-height:11.38px"><span>0.24</span></div>
<div class="dc" style="left:195.80px;top:209.05px;width:34.4px;height:10.20px;line-height:13.18px"><span>7.46</span></div>
<div class="dc" style="left:231.74px;top:209.05px;width:34.4px;height:10.20px;line-height:13.18px"><span>7.72</span></div>
<div class="dc" style="left:267.68px;top:209.05px;width:34.4px;height:10.20px;line-height:13.18px"><span>8.04</span></div>
<div class="dc" style="left:303.62px;top:209.05px;width:34.4px;height:10.20px;line-height:13.18px"><span>8.17</span></div>
<div class="dc" style="left:339.56px;top:209.05px;width:34.4px;height:10.20px;line-height:13.18px"><span>7.72</span></div>
<div class="dc" style="left:375.50px;top:209.05px;width:34.4px;height:10.20px;line-height:13.18px"><span>7.02</span></div>
<div class="dc" style="left:411.44px;top:209.05px;width:34.4px;height:10.20px;line-height:13.18px"><span>6.82</span></div>
<div class="dc" style="left:447.38px;top:209.05px;width:34.4px;height:10.20px;line-height:13.18px"><span>7.72</span></div>
<div class="dc" style="left:483.32px;top:209.05px;width:34.4px;height:10.20px;line-height:13.18px"><span>6.95</span></div>
<div class="dc" style="left:519.26px;top:209.05px;width:34.4px;height:10.20px;line-height:13.18px"><span>6.70</span></div>
<div class="dc" style="left:555.20px;top:209.05px;width:34.4px;height:10.20px;line-height:13.18px"><span>6.95</span></div>
<div class="dc" style="left:591.14px;top:209.05px;width:34.4px;height:10.20px;line-height:13.18px"><span>6.76</span></div>
<div class="dc" style="left:627.08px;top:209.05px;width:34.4px;height:10.20px;line-height:13.18px"><span>6.38</span></div>
<div class="dc" style="left:663.02px;top:209.05px;width:34.4px;height:10.20px;line-height:13.18px"><span>5.99</span></div>
<div class="dc" style="left:698.96px;top:209.05px;width:34.4px;height:10.20px;line-height:13.18px"><span>6.18</span></div>
<div class="dc" style="left:734.90px;top:209.05px;width:34.4px;height:10.20px;line-height:13.18px"><span>5.93</span></div>
<div class="rh" style="left:160px;top:220.15px;width:34px;height:11.30px;line-height:11.38px"><span>0.39</span></div>
<div class="dc" style="left:195.80px;top:220.75px;width:34.4px;height:10.20px;line-height:13.18px"><span>7.91</span></div>
<div class="dc" style="left:231.74px;top:220.75px;width:34.4px;height:10.20px;line-height:13.18px"><span>8.49</span></div>
<div class="dc" style="left:267.68px;top:220.75px;width:34.4px;height:10.20px;line-height:13.18px"><span>8.81</span></div>
<div class="dc" style="left:303.62px;top:220.75px;width:34.4px;height:10.20px;line-height:13.18px"><span>9.13</span></div>
<div class="dc" style="left:339.56px;top:220.75px;width:34.4px;height:10.20px;line-height:13.18px"><span>9.19</span></div>
<div class="dc" style="left:375.50px;top:220.75px;width:34.4px;height:10.20px;line-height:13.18px"><span>9.64</span></div>
<div class="dc" style="left:411.44px;top:220.75px;width:34.4px;height:10.20px;line-height:13.18px"><span>11.37</span></div>
<div class="dc" style="left:447.38px;top:220.75px;width:34.4px;height:10.20px;line-height:13.18px"><span>11.24</span></div>
<div class="dc" style="left:483.32px;top:220.75px;width:34.4px;height:10.20px;line-height:13.18px"><span>7.98</span></div>
<div class="dc" style="left:519.26px;top:220.75px;width:34.4px;height:10.20px;line-height:13.18px"><span>7.66</span></div>
<div class="dc" style="left:555.20px;top:220.75px;width:34.4px;height:10.20px;line-height:13.18px"><span>7.78</span></div>
<div class="dc" style="left:591.14px;top:220.75px;width:34.4px;height:10.20px;line-height:13.18px"><span>7.27</span></div>
<div class="dc" style="left:627.08px;top:220.75px;width:34.4px;height:10.20px;line-height:13.18px"><span>7.21</span></div>
<div class="dc" style="left:663.02px;top:220.75px;width:34.4px;height:10.20px;line-height:13.18px"><span>6.95</span></div>
<div class="dc" style="left:698.96px;top:220.75px;width:34.4px;height:10.20px;line-height:13.18px"><span>7.08</span></div>
<div class="dc" style="left:734.90px;top:220.75px;width:34.4px;height:10.20px;line-height:13.18px"><span>6.44</span></div>
<div class="rh" style="left:160px;top:231.85px;width:34px;height:11.30px;line-height:11.38px"><span>0.54</span></div>
<div class="dc" style="left:195.80px;top:232.45px;width:34.4px;height:10.20px;line-height:13.18px"><span>8.10</span></div>
<div class="dc" style="left:231.74px;top:232.45px;width:34.4px;height:10.20px;line-height:13.18px"><span>8.81</span></div>
<div class="dc" style="left:267.68px;top:232.45px;width:34.4px;height:10.20px;line-height:13.18px"><span>9.06</span></div>
<div class="dc" style="left:303.62px;top:232.45px;width:34.4px;height:10.20px;line-height:13.18px"><span>9.64</span></div>
<div class="dc" style="left:339.56px;top:232.45px;width:34.4px;height:10.20px;line-height:13.18px"><span>10.22</span></div>
<div class="dc" style="left:375.50px;top:232.45px;width:34.4px;height:10.20px;line-height:13.18px"><span>11.11</span></div>
<div class="dc" style="left:411.44px;top:232.45px;width:34.4px;height:10.20px;line-height:13.18px"><span>12.58</span></div>
<div class="dc" style="left:447.38px;top:232.45px;width:34.4px;height:10.20px;line-height:13.18px"><span>12.07</span></div>
<div class="dc" style="left:483.32px;top:232.45px;width:34.4px;height:10.20px;line-height:13.18px"><span>9.32</span></div>
<div class="dc" style="left:519.26px;top:232.45px;width:34.4px;height:10.20px;line-height:13.18px"><span>8.62</span></div>
<div class="dc" style="left:555.20px;top:232.45px;width:34.4px;height:10.20px;line-height:13.18px"><span>7.78</span></div>
<div class="dc" style="left:591.14px;top:232.45px;width:34.4px;height:10.20px;line-height:13.18px"><span>7.85</span></div>
<div class="dc" style="left:627.08px;top:232.45px;width:34.4px;height:10.20px;line-height:13.18px"><span>7.40</span></div>
<div class="dc" style="left:663.02px;top:232.45px;width:34.4px;height:10.20px;line-height:13.18px"><span>7.27</span></div>
<div class="dc" style="left:698.96px;top:232.45px;width:34.4px;height:10.20px;line-height:13.18px"><span>7.14</span></div>
<div class="dc" style="left:734.90px;top:232.45px;width:34.4px;height:10.20px;line-height:13.18px"><span>6.50</span></div>
<div class="rh" style="left:160px;top:243.55px;width:34px;height:11.30px;line-height:11.38px"><span>0.99</span></div>
<div class="dc" style="left:195.80px;top:244.15px;width:34.4px;height:10.20px;line-height:13.18px"><span>12.39</span></div>
<div class="dc" style="left:231.74px;top:244.15px;width:34.4px;height:10.20px;line-height:13.18px"><span>13.16</span></div>
<div class="dc" style="left:267.68px;top:244.15px;width:34.4px;height:10.20px;line-height:13.18px"><span>13.16</span></div>
<div class="dc" style="left:303.62px;top:244.15px;width:34.4px;height:10.20px;line-height:13.18px"><span>13.42</span></div>
<div class="dc" style="left:339.56px;top:244.15px;width:34.4px;height:10.20px;line-height:13.18px"><span>14.06</span></div>
<div class="dc" style="left:375.50px;top:244.15px;width:34.4px;height:10.20px;line-height:13.18px"><span>14.38</span></div>
<div class="dc" style="left:411.44px;top:244.15px;width:34.4px;height:10.20px;line-height:13.18px"><span>14.44</span></div>
<div class="dc" style="left:447.38px;top:244.15px;width:34.4px;height:10.20px;line-height:13.18px"><span>13.74</span></div>
<div class="dc" style="left:483.32px;top:244.15px;width:34.4px;height:10.20px;line-height:13.18px"><span>11.94</span></div>
<div class="dc" style="left:519.26px;top:244.15px;width:34.4px;height:10.20px;line-height:13.18px"><span>11.37</span></div>
<div class="dc" style="left:555.20px;top:244.15px;width:34.4px;height:10.20px;line-height:13.18px"><span>9.64</span></div>
<div class="dc" style="left:591.14px;top:244.15px;width:34.4px;height:10.20px;line-height:13.18px"><span>9.19</span></div>
<div class="dc" style="left:627.08px;top:244.15px;width:34.4px;height:10.20px;line-height:13.18px"><span>8.81</span></div>
<div class="dc" style="left:663.02px;top:244.15px;width:34.4px;height:10.20px;line-height:13.18px"><span>8.87</span></div>
<div class="dc" style="left:698.96px;top:244.15px;width:34.4px;height:10.20px;line-height:13.18px"><span>8.68</span></div>
<div class="dc" style="left:734.90px;top:244.15px;width:34.4px;height:10.20px;line-height:13.18px"><span>8.17</span></div>
<div class="rh" style="left:160px;top:255.25px;width:34px;height:11.30px;line-height:11.38px"><span>1.14</span></div>
<div class="dc" style="left:195.80px;top:255.85px;width:34.4px;height:10.20px;line-height:13.18px"><span>14.12</span></div>
<div class="dc" style="left:231.74px;top:255.85px;width:34.4px;height:10.20px;line-height:13.18px"><span>14.44</span></div>
<div class="dc" style="left:267.68px;top:255.85px;width:34.4px;height:10.20px;line-height:13.18px"><span>14.44</span></div>
<div class="dc" style="left:303.62px;top:255.85px;width:34.4px;height:10.20px;line-height:13.18px"><span>14.50</span></div>
<div class="dc" style="left:339.56px;top:255.85px;width:34.4px;height:10.20px;line-height:13.18px"><span>15.02</span></div>
<div class="dc" style="left:375.50px;top:255.85px;width:34.4px;height:10.20px;line-height:13.18px"><span>15.46</span></div>
<div class="dc" style="left:411.44px;top:255.85px;width:34.4px;height:10.20px;line-height:13.18px"><span>15.21</span></div>
<div class="dc" style="left:447.38px;top:255.85px;width:34.4px;height:10.20px;line-height:13.18px"><span>14.76</span></div>
<div class="dc" style="left:483.32px;top:255.85px;width:34.4px;height:10.20px;line-height:13.18px"><span>13.16</span></div>
<div class="dc" style="left:519.26px;top:255.85px;width:34.4px;height:10.20px;line-height:13.18px"><span>12.46</span></div>
<div class="dc" style="left:555.20px;top:255.85px;width:34.4px;height:10.20px;line-height:13.18px"><span>10.66</span></div>
<div class="dc" style="left:591.14px;top:255.85px;width:34.4px;height:10.20px;line-height:13.18px"><span>10.22</span></div>
<div class="dc" style="left:627.08px;top:255.85px;width:34.4px;height:10.20px;line-height:13.18px"><span>9.77</span></div>
<div class="dc" style="left:663.02px;top:255.85px;width:34.4px;height:10.20px;line-height:13.18px"><span>9.77</span></div>
<div class="dc" style="left:698.96px;top:255.85px;width:34.4px;height:10.20px;line-height:13.18px"><span>9.77</span></div>
<div class="dc" style="left:734.90px;top:255.85px;width:34.4px;height:10.20px;line-height:13.18px"><span>8.94</span></div>
<div class="rh" style="left:160px;top:266.95px;width:34px;height:11.30px;line-height:11.38px"><span>1.44</span></div>
<div class="dc" style="left:195.80px;top:267.55px;width:34.4px;height:10.20px;line-height:13.18px"><span>15.72</span></div>
<div class="dc" style="left:231.74px;top:267.55px;width:34.4px;height:10.20px;line-height:13.18px"><span>16.42</span></div>
<div class="dc" style="left:267.68px;top:267.55px;width:34.4px;height:10.20px;line-height:13.18px"><span>16.74</span></div>
<div class="dc" style="left:303.62px;top:267.55px;width:34.4px;height:10.20px;line-height:13.18px"><span>16.81</span></div>
<div class="dc" style="left:339.56px;top:267.55px;width:34.4px;height:10.20px;line-height:13.18px"><span>16.87</span></div>
<div class="dc" style="left:375.50px;top:267.55px;width:34.4px;height:10.20px;line-height:13.18px"><span>16.87</span></div>
<div class="dc" style="left:411.44px;top:267.55px;width:34.4px;height:10.20px;line-height:13.18px"><span>16.55</span></div>
<div class="dc" style="left:447.38px;top:267.55px;width:34.4px;height:10.20px;line-height:13.18px"><span>15.59</span></div>
<div class="dc" style="left:483.32px;top:267.55px;width:34.4px;height:10.20px;line-height:13.18px"><span>14.38</span></div>
<div class="dc" style="left:519.26px;top:267.55px;width:34.4px;height:10.20px;line-height:13.18px"><span>14.06</span></div>
<div class="dc" style="left:555.20px;top:267.55px;width:34.4px;height:10.20px;line-height:13.18px"><span>12.01</span></div>
<div class="dc" style="left:591.14px;top:267.55px;width:34.4px;height:10.20px;line-height:13.18px"><span>11.82</span></div>
<div class="dc" style="left:627.08px;top:267.55px;width:34.4px;height:10.20px;line-height:13.18px"><span>11.05</span></div>
<div class="dc" style="left:663.02px;top:267.55px;width:34.4px;height:10.20px;line-height:13.18px"><span>11.11</span></div>
<div class="dc" style="left:698.96px;top:267.55px;width:34.4px;height:10.20px;line-height:13.18px"><span>10.98</span></div>
<div class="dc" style="left:734.90px;top:267.55px;width:34.4px;height:10.20px;line-height:13.18px"><span>10.22</span></div>
<div class="rh" style="left:160px;top:278.65px;width:34px;height:11.30px;line-height:11.38px"><span>1.59</span></div>
<div class="dc" style="left:195.80px;top:279.25px;width:34.4px;height:10.20px;line-height:13.18px"><span>15.72</span></div>
<div class="dc" style="left:231.74px;top:279.25px;width:34.4px;height:10.20px;line-height:13.18px"><span>16.36</span></div>
<div class="dc" style="left:267.68px;top:279.25px;width:34.4px;height:10.20px;line-height:13.18px"><span>16.81</span></div>
<div class="dc" style="left:303.62px;top:279.25px;width:34.4px;height:10.20px;line-height:13.18px"><span>17.32</span></div>
<div class="dc" style="left:339.56px;top:279.25px;width:34.4px;height:10.20px;line-height:13.18px"><span>17.32</span></div>
<div class="dc" style="left:375.50px;top:279.25px;width:34.4px;height:10.20px;line-height:13.18px"><span>17.32</span></div>
<div class="dc" style="left:411.44px;top:279.25px;width:34.4px;height:10.20px;line-height:13.18px"><span>17.32</span></div>
<div class="dc" style="left:447.38px;top:279.25px;width:34.4px;height:10.20px;line-height:13.18px"><span>16.62</span></div>
<div class="dc" style="left:483.32px;top:279.25px;width:34.4px;height:10.20px;line-height:13.18px"><span>15.08</span></div>
<div class="dc" style="left:519.26px;top:279.25px;width:34.4px;height:10.20px;line-height:13.18px"><span>14.95</span></div>
<div class="dc" style="left:555.20px;top:279.25px;width:34.4px;height:10.20px;line-height:13.18px"><span>12.97</span></div>
<div class="dc" style="left:591.14px;top:279.25px;width:34.4px;height:10.20px;line-height:13.18px"><span>12.65</span></div>
<div class="dc" style="left:627.08px;top:279.25px;width:34.4px;height:10.20px;line-height:13.18px"><span>11.88</span></div>
<div class="dc" style="left:663.02px;top:279.25px;width:34.4px;height:10.20px;line-height:13.18px"><span>11.94</span></div>
<div class="dc" style="left:698.96px;top:279.25px;width:34.4px;height:10.20px;line-height:13.18px"><span>11.94</span></div>
<div class="dc" style="left:734.90px;top:279.25px;width:34.4px;height:10.20px;line-height:13.18px"><span>10.92</span></div>

<!-- RPM limits dialog -->
<div class="a" id="dlg"></div>
<div class="a" id="dlgin"></div>
<div class="chip" style="left:402px;top:299px;width:12.5px;height:6.5px"></div>
<div class="t" style="left:417px;top:297.8px;font-size:10px;color:#10142a;letter-spacing:-0.15px">RPM limits</div>
<div class="a" style="left:500px;top:296.5px;width:24px;height:12.5px;border:1px solid #7a3a34;border-radius:3px;background:linear-gradient(#eab0a4,#dc7a68 45%,#c84a32 55%,#d0604a)"></div>
<svg class="a" style="left:507.5px;top:298.5px" width="9" height="8" viewBox="0 0 9 8"><path d="M2 1.5 L7 6.5 M7 1.5 L2 6.5" stroke="#6a2a2a" stroke-width="3" stroke-linecap="round"/><path d="M2 1.5 L7 6.5 M7 1.5 L2 6.5" stroke="#fff" stroke-width="1.7" stroke-linecap="round"/></svg>
<div class="a" id="dlgcl"></div>
<div class="a" style="left:409px;top:312.5px;width:110px;height:36px;background:#dcdcdc;border-top:1.5px solid #6a6a6a;border-left:1.5px solid #6a6a6a;border-right:1px solid #fafafa;border-bottom:1px solid #fafafa"></div>
<div class="a" style="left:410.5px;top:314px;width:107px;height:10px;background:#f0f0f0;border-bottom:1px solid #c8c8c8"></div>
<div class="t" style="left:441px;top:315px;font-size:9px;font-weight:bold;color:#000">RPM limits</div>
<div class="ch" style="left:411px;top:325px;width:34px;height:10px"></div>
<div class="ch" style="left:446.5px;top:325px;width:35px;height:10px;background:#f8eaa2;font-size:9px"><span>limit 1</span></div>
<div class="ch" style="left:483px;top:325px;width:35px;height:10px;font-size:9px"><span>limit 2</span></div>
<div class="a" style="left:411px;top:336px;width:34px;height:12px;background:#f7e79a"></div>
<div class="dc" style="left:446px;top:335.5px;width:37px;height:13px;background:#c2d2ec;border:2px solid #181818;line-height:10.5px;font-size:9.6px;padding-right:0.5px"><span>6918</span></div>
<div class="dc" style="left:483.5px;top:336px;width:35px;height:12px;line-height:13px;font-size:9.6px;padding-right:1px"><span>6720</span></div>
<div class="btn" style="left:418px;top:352px;width:90px;height:18px">View Graph</div>
<div class="btn" style="left:418px;top:372px;width:43px;height:17px">Toolbox</div>
<div class="btn" style="left:463px;top:372px;width:43.5px;height:17px">Compare</div>
<div class="btn" style="left:418px;top:391.5px;width:43px;height:17px;border:1px solid #303030">Save</div>
<div class="btn" style="left:463px;top:391.5px;width:43.5px;height:17px">Cancel</div>

<!-- status -->
<div class="a" id="status"></div>
<div class="sp red" style="left:-11px;width:68.5px">Not Emulating</div>
<div class="sp" style="left:60px;width:150px">Hardware Not Found</div>
<div class="sp" style="left:212px;width:81px">Not Ready</div>
<div class="sp red" style="left:294.5px;width:103px;font-size:9px;letter-spacing:-0.15px">ALDL: Not Connected</div>
<div class="sp" style="left:400px;width:388px;text-align:left;padding-left:1px;border-right:0;letter-spacing:-0.3px;line-height:12.5px">Table, Offset: 8840,&nbsp; Cell Size: 8 Bit</div>

<!-- taskbar -->
<div class="a" id="task"></div>
<div class="a" style="left:-5px;top:557px;width:29px;height:28px;border-radius:50%;background:radial-gradient(ellipse at 45% 75%,#5ad0ff 0,#2a90d8 30%,#1a5aa0 60%,#0e3a70 85%,#2a5a80 100%);box-shadow:0 0 0 1px #1a3550"></div><div class="a" style="left:-2px;top:558px;width:22px;height:11px;border-radius:50% 50% 45% 45%;background:linear-gradient(rgba(255,255,255,.55),rgba(255,255,255,.08))"></div>
<svg class="a" style="left:1px;top:562px" width="18" height="17" viewBox="0 0 18 17"><path d="M1.5 4 Q4 1.5 7.5 2.5 L6 9 Q3 8 0.5 9.5Z" fill="#f0602a"/><path d="M8.5 3 Q12 4.5 16.5 2.5 L15 9.5 Q11 11 7 9.5Z" fill="#86c440"/><path d="M0.3 10.5 Q3 9 5.8 10 L4.5 16 Q2 15 -0.5 16.5Z" fill="#38a4ec"/><path d="M6.8 10.5 Q11 12 14.8 10.5 L13.5 16.5 Q9.5 18 5.5 16Z" fill="#ffc820"/></svg>
<div class="a" style="left:33px;top:564.5px;width:6px;height:15px;background:radial-gradient(circle,#56626e 0 0.7px,transparent 0.9px);background-size:2.2px 2.6px"></div>
<div class="tb" style="left:47px;width:90.5px"><div class="a" style="left:4px;top:3.5px;width:13px;height:13px;border-radius:50%;background:#29a8e8"></div><div class="t" style="left:7.5px;top:5px;font-size:10px;font-weight:bold;color:#fff">S</div><div class="t">Skype<span style="font-size:5.5px;vertical-align:3.5px;letter-spacing:-0.2px">TM</span> - iva...</div></div>
<div class="tb" style="left:137.5px;width:90px"><svg class="a" style="left:3.5px;top:3px" width="14" height="14" viewBox="0 0 14 14"><circle cx="7" cy="7" r="6.5" fill="#2aa8ee"/><path d="M3.5 4.5 Q3.5 3.3 4.7 3.3 L9.3 3.3 Q10.5 3.3 10.5 4.5 L10.5 7.5 Q10.5 8.7 9.3 8.7 L6.5 8.7 L5 10.5 L5 8.7 L4.7 8.7 Q3.5 8.7 3.5 7.5Z" fill="#fff"/><path d="M5 6h4" stroke="#2aa8ee" stroke-width="0.8"/></svg><div class="t" style="left:20px">Ивайло Тодо...</div></div>
<div class="tb" style="left:230px;width:91px"><svg class="a" style="left:6px;top:3px" width="14" height="14" viewBox="0 0 14 14"><circle cx="7" cy="7.2" r="6" fill="#d85a10"/><circle cx="8.3" cy="5.8" r="3.8" fill="#3a88d8"/><circle cx="8.8" cy="5" r="1.6" fill="#7cc8f4"/><path d="M2.2 1.8 L4 4.2 L5.6 2.6 L6.2 5.2 L4.6 7.8 Q6.8 10.2 10 8.6 Q12.2 6.2 11.2 2.6 Q13.4 5.6 12.9 8.8 Q11.8 13.2 7 13.2 Q2.2 13 1.2 8.6 Q0.8 4.6 2.2 1.8Z" fill="#f28a1e"/><path d="M11.2 3 Q13 6 12.4 9.2" stroke="#ffd23a" stroke-width="1.1" fill="none"/></svg><div class="t">FIAT ФОРУМ...</div></div>
<div class="tb" style="left:321px;width:91.5px"><svg class="a" style="left:6px;top:3px" width="14" height="14" viewBox="0 0 14 14"><circle cx="7" cy="7.2" r="6" fill="#d85a10"/><circle cx="8.3" cy="5.8" r="3.8" fill="#3a88d8"/><circle cx="8.8" cy="5" r="1.6" fill="#7cc8f4"/><path d="M2.2 1.8 L4 4.2 L5.6 2.6 L6.2 5.2 L4.6 7.8 Q6.8 10.2 10 8.6 Q12.2 6.2 11.2 2.6 Q13.4 5.6 12.9 8.8 Q11.8 13.2 7 13.2 Q2.2 13 1.2 8.6 Q0.8 4.6 2.2 1.8Z" fill="#f28a1e"/><path d="M11.2 3 Q13 6 12.4 9.2" stroke="#ffd23a" stroke-width="1.1" fill="none"/></svg><div class="t">tuner pro rt f...</div></div>
<div class="tb" style="left:412.5px;width:90px"><svg class="a" style="left:6px;top:3px" width="14" height="14" viewBox="0 0 14 14"><circle cx="7" cy="7.2" r="6" fill="#d85a10"/><circle cx="8.3" cy="5.8" r="3.8" fill="#3a88d8"/><circle cx="8.8" cy="5" r="1.6" fill="#7cc8f4"/><path d="M2.2 1.8 L4 4.2 L5.6 2.6 L6.2 5.2 L4.6 7.8 Q6.8 10.2 10 8.6 Q12.2 6.2 11.2 2.6 Q13.4 5.6 12.9 8.8 Q11.8 13.2 7 13.2 Q2.2 13 1.2 8.6 Q0.8 4.6 2.2 1.8Z" fill="#f28a1e"/><path d="M11.2 3 Q13 6 12.4 9.2" stroke="#ffd23a" stroke-width="1.1" fill="none"/></svg><div class="t">TunerPro and...</div></div>
<div class="tb act" style="left:507px;width:88px"><div class="chip" style="left:5px;top:6.5px;width:15px;height:6px"></div><div class="t" style="left:22px">TunerPro RT ...</div></div>
<div class="a" style="left:605px;top:564.5px;width:6px;height:15px;background:radial-gradient(circle,#56626e 0 0.7px,transparent 0.9px);background-size:2.2px 2.6px"></div>
<div class="t" style="left:619px;top:566.5px;font-size:9.5px;color:#e8eef4">EN</div>
<svg class="a" style="left:642px;top:566px" width="15" height="14" viewBox="0 0 15 14"><path d="M3 2 Q7 -1 11 2 Q15 5 13 10 Q11 14 6 13 Q1 12 1 7 Q1 4 3 2Z" fill="#f5c518" stroke="#c89000" stroke-width="0.6"/><path d="M7 4 L7 8 L10 9" fill="none" stroke="#7a5a00" stroke-width="1"/></svg>
<svg class="a" style="left:661px;top:565px" width="15" height="14" viewBox="0 0 15 14"><path d="M1 5 L6 5 L7 4 L14 4 L14 13 L1 13Z" fill="#28a828" stroke="#107010" stroke-width="0.6"/><path d="M8 1 Q11 0 13 2" fill="none" stroke="#40c040" stroke-width="1.5"/><path d="M4 8.5 L6.5 11 L11 6.5" fill="none" stroke="#fff" stroke-width="1.6"/></svg>
<svg class="a" style="left:681px;top:566px" width="14" height="14" viewBox="0 0 14 14"><rect x="2.5" y="2.5" width="10" height="8" fill="#3a4a5a" stroke="#e8e8e8"/><circle cx="2" cy="2" r="1.5" fill="#ddd"/><path d="M7 13.5 L10 7 L13.5 13.5Z" fill="#f8d020" stroke="#806000" stroke-width="0.5"/><path d="M10 9 v2.5" stroke="#000" stroke-width="0.9"/></svg>
<svg class="a" style="left:699px;top:567px" width="12" height="11" viewBox="0 0 12 11"><path d="M0 3.5h2.5L6 0.5v10L2.5 7.5H0Z" fill="#e8e8e8"/><path d="M8 3 Q9.5 5.5 8 8 M10 1.5 Q12.5 5.5 10 9.5" fill="none" stroke="#ddd" stroke-width="1"/></svg>
<div class="t" style="left:735px;top:567px;font-size:9.8px;color:#e8eef4">00:05</div>
<div class="a" style="left:776px;top:562px;width:11.5px;height:21px;border-left:1px solid #6a7a8a;background:linear-gradient(#3a4a5c,#1e2c3c)"></div>
</body></html>
